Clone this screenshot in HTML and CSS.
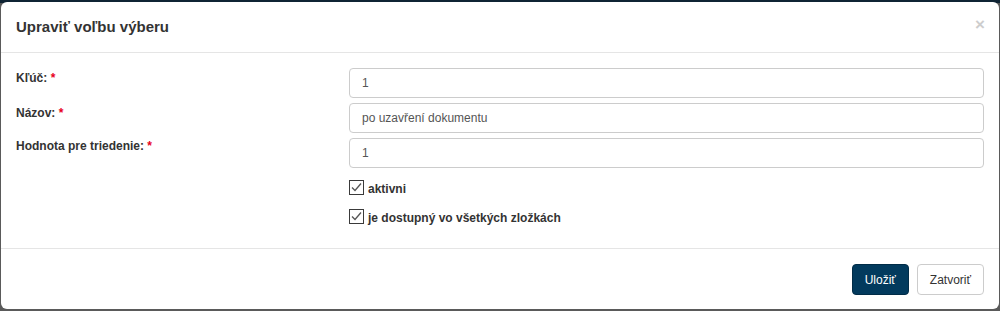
FILE: index.html
```html
<!DOCTYPE html>
<html lang="sk">
<head>
<meta charset="utf-8">
<title>Upraviť voľbu výberu</title>
<link rel="stylesheet" href="styles.css">
</head>
<body>
<div class="modal">
  <div class="modal-header">
    <h4 class="modal-title">Upraviť voľbu výberu</h4>
    <span class="close">×</span>
  </div>
  <div class="modal-body">
    <div class="form-row">
      <label class="form-label">Kľúč: <span class="req">*</span></label>
      <input class="form-input" type="text" value="1">
    </div>
    <div class="form-row">
      <label class="form-label">Názov: <span class="req">*</span></label>
      <input class="form-input" type="text" value="po uzavření dokumentu">
    </div>
    <div class="form-row">
      <label class="form-label label-tight">Hodnota pre triedenie: <span class="req">*</span></label>
      <input class="form-input" type="text" value="1">
    </div>
    <div class="checks">
      <div class="check">
        <svg class="cbox" width="15" height="15" viewBox="0 0 15 15"><rect x="0.5" y="0.5" width="14" height="14" fill="#fff" stroke="#3a3a3a"/><path d="M3 7.5 L6 10.5 L12 3.5" fill="none" stroke="#555" stroke-width="1.3"/></svg>
        <span class="check-label">aktivni</span>
      </div>
      <div class="check">
        <svg class="cbox" width="15" height="15" viewBox="0 0 15 15"><rect x="0.5" y="0.5" width="14" height="14" fill="#fff" stroke="#3a3a3a"/><path d="M3 7.5 L6 10.5 L12 3.5" fill="none" stroke="#555" stroke-width="1.3"/></svg>
        <span class="check-label">je dostupný vo všetkých zložkách</span>
      </div>
    </div>
  </div>
  <div class="modal-footer">
    <button class="btn btn-primary">Uložiť</button>
    <button class="btn btn-default">Zatvoriť</button>
  </div>
</div>
</body>
</html>
```

FILE: styles.css
```css
html, body {
  margin: 0;
  padding: 0;
}
body {
  width: 1000px;
  height: 311px;
  overflow: hidden;
  background: linear-gradient(#0f2434 0, #0f2434 3px, #5a5a5a 3px);
  font-family: "Liberation Sans", Arial, sans-serif;
  font-size: 12px;
  color: #333;
}
.modal {
  margin: 2px 1px 0 1px;
  height: 307px;
  background: #fff;
  border-radius: 6px;
  display: flex;
  flex-direction: column;
  box-sizing: border-box;
}
.modal-header {
  position: relative;
  padding: 15px;
  border-bottom: 1px solid #e5e5e5;
  height: 50px;
  box-sizing: border-box;
  height: 51px;
}
.modal-title {
  margin: 0;
  font-size: 15px;
  font-weight: bold;
  line-height: 20px;
  color: #333;
}
.close {
  position: absolute;
  right: 14px;
  top: 13px;
  font-size: 17px;
  font-weight: bold;
  line-height: 20px;
  color: #cdcdcd;
}
.modal-body {
  padding: 15px 15px 0 15px;
  height: 195px;
  box-sizing: border-box;
}
.form-row {
  display: grid;
  grid-template-columns: 333px 1fr;
  margin-bottom: 5px;
}
.form-label {
  font-weight: bold;
  padding-top: 3px;
  line-height: 14px;
}
.label-tight {
  padding-top: 1px;
}
.req {
  color: #e8001c;
}
.form-input {
  height: 30px;
  box-sizing: border-box;
  border: 1px solid #ccc;
  border-radius: 4px;
  padding: 0 12px;
  font-family: "Liberation Sans", Arial, sans-serif;
  font-size: 12px;
  color: #555;
  background: #fff;
  outline: none;
}
.checks {
  margin-left: 333px;
  padding-top: 5px;
  display: flex;
  flex-direction: column;
  gap: 9px;
}
.check {
  display: flex;
  align-items: flex-end;
  height: 20px;
}
.cbox {
  display: block;
  margin-bottom: 3px;
  margin-right: 4px;
}
.check-label {
  font-weight: bold;
  line-height: 14px;
  margin-bottom: 2px;
}
.modal-footer {
  border-top: 1px solid #e5e5e5;
  padding: 15px 15px 0 15px;
  display: flex;
  justify-content: flex-end;
  gap: 8px;
}
.btn {
  height: 31px;
  padding: 0 12px;
  border-radius: 4px;
  font-family: "Liberation Sans", Arial, sans-serif;
  font-size: 12px;
  border: 1px solid transparent;
  cursor: pointer;
}
.btn-primary {
  background: #023a5d;
  border-color: #012c47;
  color: #fff;
}
.btn-default {
  background: #fff;
  border-color: #ccc;
  color: #333;
}
```
